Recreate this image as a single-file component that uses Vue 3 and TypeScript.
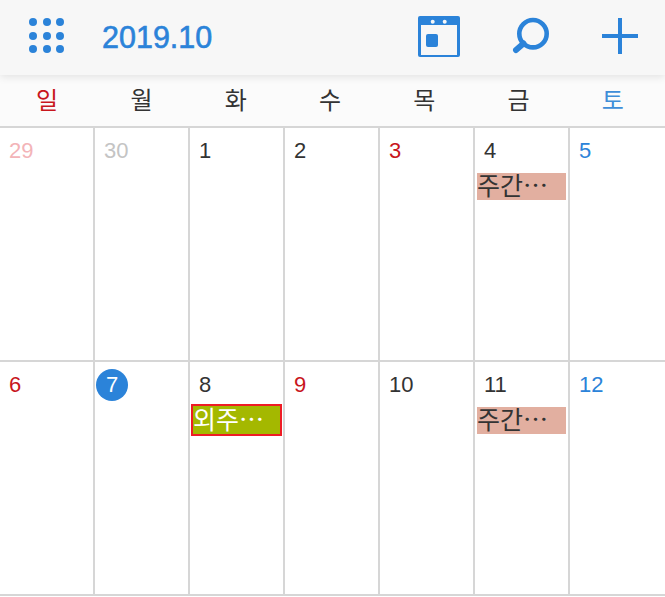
<script setup lang="ts">
interface Day {
  label: string;
  tone?: string;
  event?: string;
  eventKind?: string;
}

const weekdays = [
  { label: '일', tone: 'sun' },
  { label: '월', tone: '' },
  { label: '화', tone: '' },
  { label: '수', tone: '' },
  { label: '목', tone: '' },
  { label: '금', tone: '' },
  { label: '토', tone: 'sat' },
];

const days: Day[] = [
  { label: '29', tone: 'sun-muted' },
  { label: '30', tone: 'muted' },
  { label: '1' },
  { label: '2' },
  { label: '3', tone: 'sun' },
  { label: '4', event: '주간⋯', eventKind: 'weekly' },
  { label: '5', tone: 'sat' },
  { label: '6', tone: 'sun' },
  { label: '7', tone: 'today' },
  { label: '8', event: '외주⋯', eventKind: 'outside' },
  { label: '9', tone: 'sun' },
  { label: '10' },
  { label: '11', event: '주간⋯', eventKind: 'weekly' },
  { label: '12', tone: 'sat' },
];
</script>

<template>
  <div class="calendar">
    <header class="topbar">
      <svg class="apps" width="38" height="38" viewBox="0 0 38 38" fill="#2b83d9">
        <template v-for="y in [5, 19, 32]" :key="y">
          <circle v-for="x in [5, 19, 32]" :key="x" :cx="x" :cy="y" r="4" />
        </template>
      </svg>
      <h1 class="title">2019.10</h1>
      <div class="actions">
        <svg width="42" height="41" viewBox="0 0 42 41">
          <rect x="0" y="0" width="42" height="41" rx="2" fill="#2b83d9" />
          <rect x="3" y="9" width="36" height="30" fill="#f7f7f7" />
          <circle cx="14.7" cy="5.7" r="2" fill="#f7f7f7" />
          <circle cx="26.7" cy="5.7" r="2" fill="#f7f7f7" />
          <rect x="8" y="18" width="12" height="13" rx="2" fill="#2b83d9" />
        </svg>
        <svg width="38" height="38" viewBox="0 0 38 38" fill="none" stroke="#2b83d9">
          <circle cx="21" cy="16.7" r="13.7" stroke-width="4.6" />
          <path d="M11.5 26.5 L4 33" stroke-width="6" stroke-linecap="round" />
        </svg>
        <svg width="36" height="36" viewBox="0 0 36 36" stroke="#2b83d9" stroke-width="4">
          <path d="M18 0V36M0 18H36" />
        </svg>
      </div>
    </header>

    <div class="weekdays">
      <span v-for="w in weekdays" :key="w.label" class="weekday" :class="w.tone">{{ w.label }}</span>
    </div>

    <div class="grid">
      <div v-for="d in days" :key="d.label" class="cell">
        <span class="date" :class="d.tone">{{ d.label }}</span>
        <div v-if="d.event" class="event" :class="d.eventKind">{{ d.event }}</div>
      </div>
    </div>
  </div>
</template>

<style>
html, body {
  background: #fff;
  overflow: hidden;
}
</style>

<style scoped>
.calendar {
  width: 665px;
  height: 597px;
  overflow: hidden;
  font-family: "Liberation Sans", "Noto Sans CJK KR", sans-serif;
  color: #333;
}

.topbar {
  position: relative;
  z-index: 1;
  display: flex;
  align-items: center;
  height: 75px;
  box-sizing: border-box;
  padding: 0 27px 3px 28px;
  background: #f7f7f7;
  box-shadow: 0 2px 8px rgba(0, 0, 0, 0.1);
}

.apps {
  margin-right: 36px;
}

.title {
  margin: 2px 0 0;
  font-size: 30.5px;
  font-weight: 400;
  color: #2b83d9;
  -webkit-text-stroke: 0.6px #2b83d9;
}

.actions {
  display: flex;
  align-items: center;
  gap: 52px;
  margin-left: auto;
}

.weekdays {
  display: grid;
  grid-template-columns: repeat(7, 1fr);
  height: 51px;
  padding-right: 5px;
  background: #fbfbfb;
  border-bottom: 2px solid #d6d6d6;
  box-sizing: content-box;
}

.weekday {
  text-align: center;
  padding-top: 11px;
  font-size: 24px;
  line-height: 30px;
}

.weekday.sun {
  color: #c8161d;
}

.weekday.sat {
  color: #3f8ed8;
}

.grid {
  display: grid;
  grid-template-columns: repeat(7, 95px);
  grid-auto-rows: 234px;
}

.cell {
  box-sizing: border-box;
  border-right: 2px solid #d6d6d6;
  border-bottom: 2px solid #d6d6d6;
  padding: 7px 2px 0;
}

.cell:nth-child(7n) {
  border-right: none;
}

.date {
  display: block;
  height: 32px;
  padding-left: 7px;
  font-size: 22px;
  line-height: 32px;
}

.date.sun {
  color: #c8161d;
}

.date.sat {
  color: #2b83d9;
}

.date.muted {
  color: #c4c4c4;
}

.date.sun-muted {
  color: #f3b4b8;
}

.date.today {
  width: 32px;
  margin-left: -1px;
  padding-left: 0;
  border-radius: 50%;
  background: #2b83d9;
  color: #fff;
  text-align: center;
}

.event {
  margin-top: 6px;
  font-size: 25px;
  line-height: 27px;
  height: 27px;
  overflow: hidden;
  white-space: nowrap;
}

.event.weekly {
  background: #e2afa0;
  color: #333;
}

.event.outside {
  height: 28px;
  margin: 3px -1px 0;
  border: 2px solid #ee1c25;
  background: #a4b800;
  background-clip: padding-box;
  color: #fff;
  line-height: 28px;
}
</style>
